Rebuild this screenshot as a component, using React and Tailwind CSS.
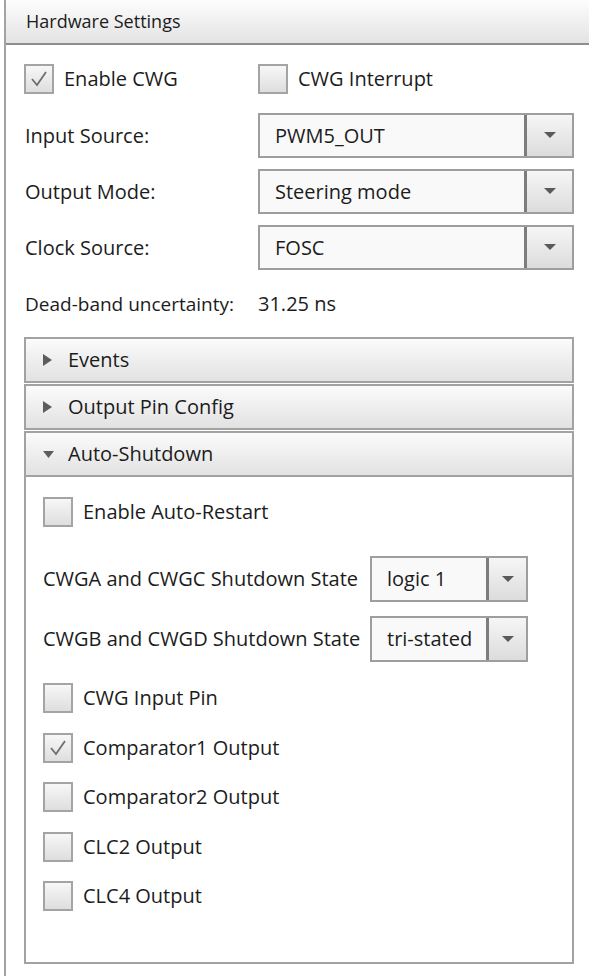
import React from "react";

const font = "font-['Open_Sans','Noto_Sans',sans-serif]";

// WPF-ish checkbox with optional tick
const Check = ({ checked, label, className = "" }) => (
  <div className={`flex items-center ${className}`}>
    <div className="w-[30px] h-[30px] shrink-0 border-2 border-[#a4a4a4] bg-gradient-to-b from-[#f7f7f7] to-[#dedede] flex items-center justify-center">
      {checked && (
        <svg width="20" height="18" viewBox="0 0 20 18">
          <polyline points="3,9 8,15 17,2" fill="none" stroke="#6e6e6e" strokeWidth="1.8" />
        </svg>
      )}
    </div>
    <span className="ml-[10px] whitespace-nowrap">{label}</span>
  </div>
);

const Caret = () => (
  <svg width="12" height="7" viewBox="0 0 12 7">
    <polygon points="0,0 12,0 6,6" fill="#5a5a5a" />
  </svg>
);

const Select = ({ value, className = "", btn = "w-[48px]" }) => (
  <div className={`flex border-2 border-[#9e9e9e] bg-[#f9f9f9] ${className}`}>
    <div className="flex-1 flex items-center pl-[15px] whitespace-nowrap">{value}</div>
    <div className={`${btn} border-l-[3px] border-[#7d7d7d] bg-gradient-to-b from-[#f6f6f6] to-[#dcdcdc] flex items-center justify-center`}>
      <Caret />
    </div>
  </div>
);

const AccHeader = ({ label, open, className = "" }) => (
  <div className={`h-[46px] border-2 border-[#a2a2a2] bg-gradient-to-b from-[#fbfbfb] to-[#e2e2e2] flex items-center pl-[17px] ${className}`}>
    {open ? (
      <svg width="11" height="7" viewBox="0 0 11 7">
        <polygon points="0,0 11,0 5.5,7" fill="#5c5c5c" />
      </svg>
    ) : (
      <svg width="9" height="12" viewBox="0 0 9 12">
        <polygon points="0,0 9,6 0,12" fill="#5c5c5c" />
      </svg>
    )}
    <span className={open ? "ml-[14px]" : "ml-[16px]"}>{label}</span>
  </div>
);

export default function App() {
  return (
    <div className={`w-[589px] h-[976px] bg-white overflow-hidden text-[20px] text-[#1c1c1c] ${font}`}>
      <div className="ml-[4px] h-full border-l-2 border-[#a3a3a3] flex flex-col">
        <div className="h-[45px] shrink-0 flex items-center pl-[20px] text-[18px] bg-gradient-to-b from-[#fdfdfd] to-[#e3e3e3] border-b-2 border-[#8e8e8e]">
          Hardware Settings
        </div>

        <div className="pl-[18px] pr-[15px] pt-[19px]">
          <div className="flex items-center">
            <Check checked label="Enable CWG" className="w-[234px]" />
            <Check label="CWG Interrupt" />
          </div>

          <div className="mt-[19px] flex flex-col gap-[11px]">
            {[
              ["Input Source:", "PWM5_OUT"],
              ["Output Mode:", "Steering mode"],
              ["Clock Source:", "FOSC"],
            ].map(([l, v]) => (
              <div key={l} className="flex items-center">
                <div className="w-[234px] pl-[1px]">{l}</div>
                <Select value={v} className="flex-1 h-[45px]" />
              </div>
            ))}
          </div>

          <div className="mt-[20px] h-[28px] flex items-center">
            <div className="w-[234px] shrink-0 pl-[1px] text-[19px] whitespace-nowrap">Dead-band uncertainty:</div>
            <div>31.25 ns</div>
          </div>

          <div className="mt-[19px]">
            <AccHeader label="Events" />
            <AccHeader label="Output Pin Config" className="mt-px" />
            <AccHeader label="Auto-Shutdown" open className="mt-px" />
            <div className="h-[487px] border-2 border-t-0 border-[#a2a2a2] pl-[17px] pt-[20px]">
              <Check label="Enable Auto-Restart" />

              <div className="mt-[29px] flex flex-col gap-[14px]">
                {[
                  ["CWGA and CWGC Shutdown State", "logic 1"],
                  ["CWGB and CWGD Shutdown State", "tri-stated"],
                ].map(([l, v]) => (
                  <div key={l} className="flex items-center">
                    <span className="w-[317px] shrink-0 whitespace-nowrap">{l}</span>
                    <Select value={v} className="ml-[10px] w-[158px] h-[46px]" btn="w-[40px]" />
                  </div>
                ))}
              </div>

              <div className="mt-[21px] flex flex-col gap-[19.5px]">
                <Check label="CWG Input Pin" />
                <Check checked label="Comparator1 Output" />
                <Check label="Comparator2 Output" />
                <Check label="CLC2 Output" />
                <Check label="CLC4 Output" />
              </div>
            </div>
          </div>
        </div>
      </div>
    </div>
  );
}
